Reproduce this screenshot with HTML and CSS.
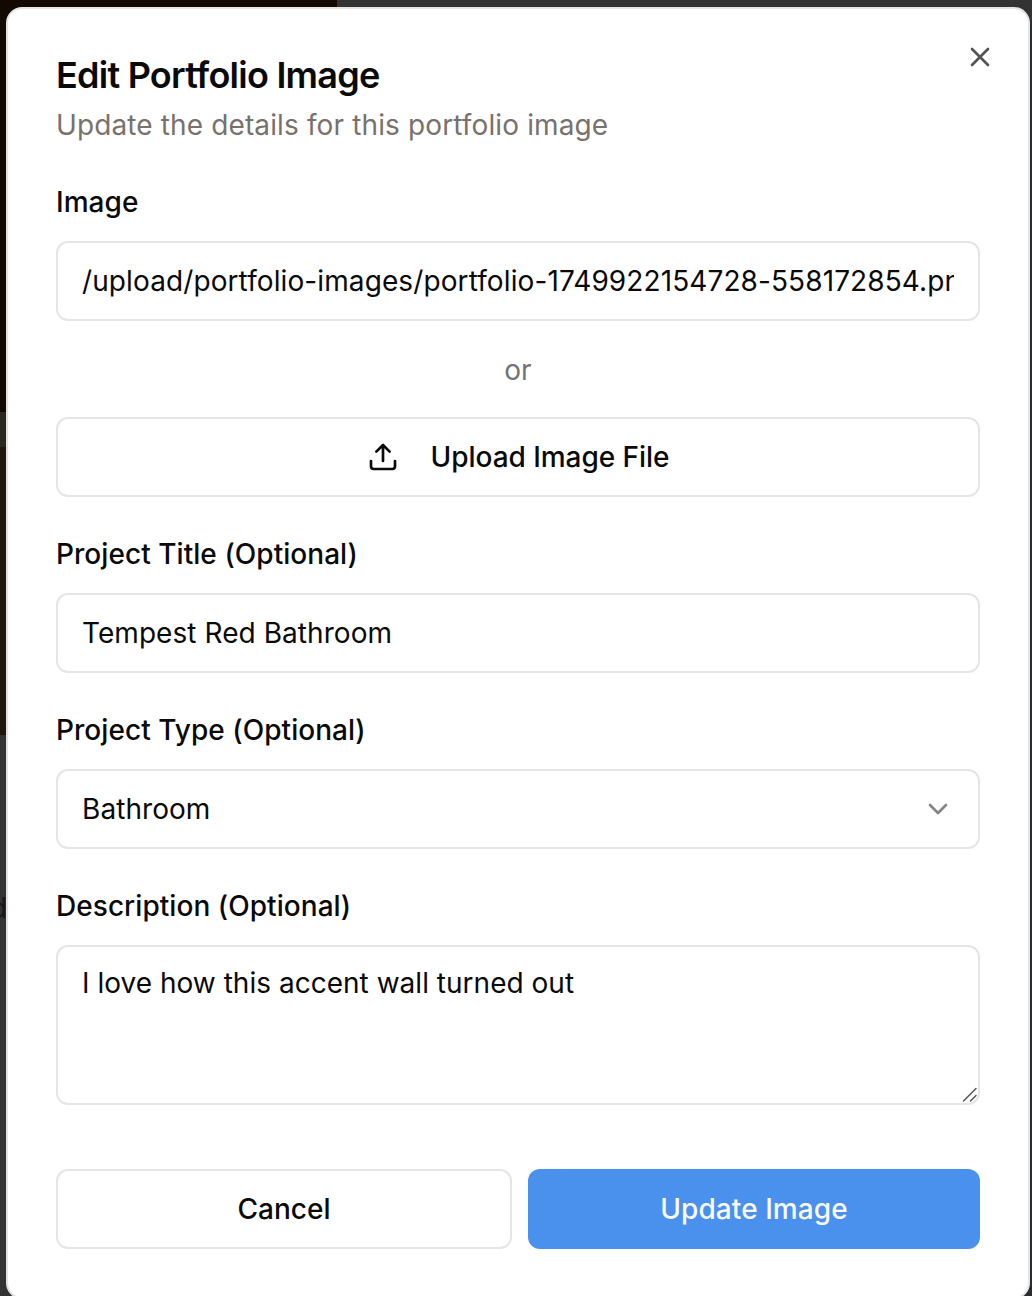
FILE: index.html
```
<!DOCTYPE html>
<html lang="en">
<head>
<meta charset="utf-8">
<title>Edit Portfolio Image</title>
<link rel="stylesheet" href="styles.css">
</head>
<body>
<div class="backdrop"><span class="backdrop-text">d</span></div>
<main class="dialog">
  <button class="close" type="button" aria-label="Close">
    <svg width="32" height="32" viewBox="0 0 24 24"><path d="M18 6 6 18M6 6l12 12"/></svg>
  </button>
  <header>
    <h1 class="title">Edit Portfolio Image</h1>
    <p class="subtitle">Update the details for this portfolio image</p>
  </header>
  <form class="form">
    <div class="field">
      <label class="label">Image</label>
      <div class="control"><span class="value path">/upload/portfolio-images/portfolio-1749922154728-558172854.png</span></div>
      <div class="or">or</div>
      <button class="control upload" type="button">
        <svg width="32" height="32" viewBox="0 0 24 24"><path d="M21 15v4a2 2 0 0 1-2 2H5a2 2 0 0 1-2-2v-4M17 8l-5-5-5 5M12 3v12"/></svg>
        <span>Upload Image File</span>
      </button>
    </div>
    <div class="field">
      <label class="label">Project Title (Optional)</label>
      <div class="control"><span class="value">Tempest Red Bathroom</span></div>
    </div>
    <div class="field">
      <label class="label">Project Type (Optional)</label>
      <div class="control select"><span class="value">Bathroom</span>
        <svg width="32" height="32" viewBox="0 0 24 24"><path d="m6 9 6 6 6-6"/></svg>
      </div>
    </div>
    <div class="field">
      <label class="label">Description (Optional)</label>
      <div class="control area"><span class="value">I love how this accent wall turned out</span>
        <svg class="grip" width="16" height="16" viewBox="0 0 16 16"><path d="M1.5 14 14 1.500M8.500 14 14 8.500"/></svg>
      </div>
    </div>
    <div class="actions">
      <button class="control cancel" type="button">Cancel</button>
      <button class="control submit" type="button">Update Image</button>
    </div>
  </form>
</main>
</body>
</html>
```
FILE: styles.css
```
* { box-sizing: border-box; }
html, body { height: 100%; }
body {
  margin: 0;
  padding: 7px 2px 0 6px;
  overflow: hidden;
  position: relative;
  background: #2b2c2e;
  color: #0a0a0a;
  font-family: Inter, sans-serif;
  font-size: 28px;
  line-height: 40px;
}
.backdrop {
  position: absolute;
  inset: 0;
  background:
    linear-gradient(#333, #333) 337px 0 / 695px 20px no-repeat,
    linear-gradient(#120902, #120902) 0 0 / 337px 30px no-repeat,
    linear-gradient(#120902 0 412px, #2b2721 412px 447px, #20160b 447px 735px, #333 735px) 0 0 / 30px 100% no-repeat;
}
.backdrop-text {
  position: absolute;
  left: -10px;
  top: 888px;
  color: #17171a;
}
.dialog {
  position: relative;
  height: 1292px;
  padding: 48px;
  border: 2px solid #e5e5e5;
  border-left-color: #e6e1dc;
  border-radius: 16px;
  background: #fff;
}
svg {
  flex: none;
  fill: none;
  stroke: currentColor;
  stroke-width: 2;
  stroke-linecap: round;
  stroke-linejoin: round;
}
.close {
  position: absolute;
  top: 32px;
  right: 32px;
  display: flex;
  padding: 0;
  border: 0;
  background: none;
  color: #545454;
}
.title {
  margin: 0;
  font-size: 36px;
  line-height: 36px;
  font-weight: 600;
  letter-spacing: -0.76px;
}
.subtitle {
  margin: 12px 0 0;
  color: #78716c;
  letter-spacing: 0.125px;
}
.form {
  display: flex;
  flex-direction: column;
  gap: 32px;
  margin-top: 32px;
}
.field { display: flex; flex-direction: column; }
.label {
  line-height: 48px;
  margin-bottom: 16px;
  padding-top: 1px;
  height: 48px;
  font-weight: 500;
  letter-spacing: 0.05px;
}
.control {
  display: flex;
  align-items: center;
  width: 100%;
  height: 80px;
  padding: 0 24px;
  border: 2px solid #e5e5e5;
  border-radius: 12px;
  background: #fff;
  color: inherit;
  font: inherit;
  white-space: nowrap;
}
.value { flex: 1; overflow: hidden; letter-spacing: 0.06px; }
.path { letter-spacing: 0.1px; }
.area .value { letter-spacing: 0.02px; }
.or {
  padding: 29px 0 27px;
  text-align: center;
  color: #737378;
}
.upload, .cancel, .submit { justify-content: center; font-weight: 500; }
.upload { gap: 32px; letter-spacing: -0.05px; }
.select svg { color: #858585; }
.area {
  position: relative;
  align-items: flex-start;
  height: 160px;
  padding-top: 16px;
}
.grip {
  position: absolute;
  right: 0;
  bottom: 0;
  color: #555;
  stroke-width: 1.500;
}
.actions {
  display: grid;
  grid-template-columns: 456px 452px;
  gap: 16px;
  margin-top: 32px;
}
.submit {
  border: 0;
  background: #4a90ed;
  color: #fafafa;
  letter-spacing: 0.06px;
}
```
